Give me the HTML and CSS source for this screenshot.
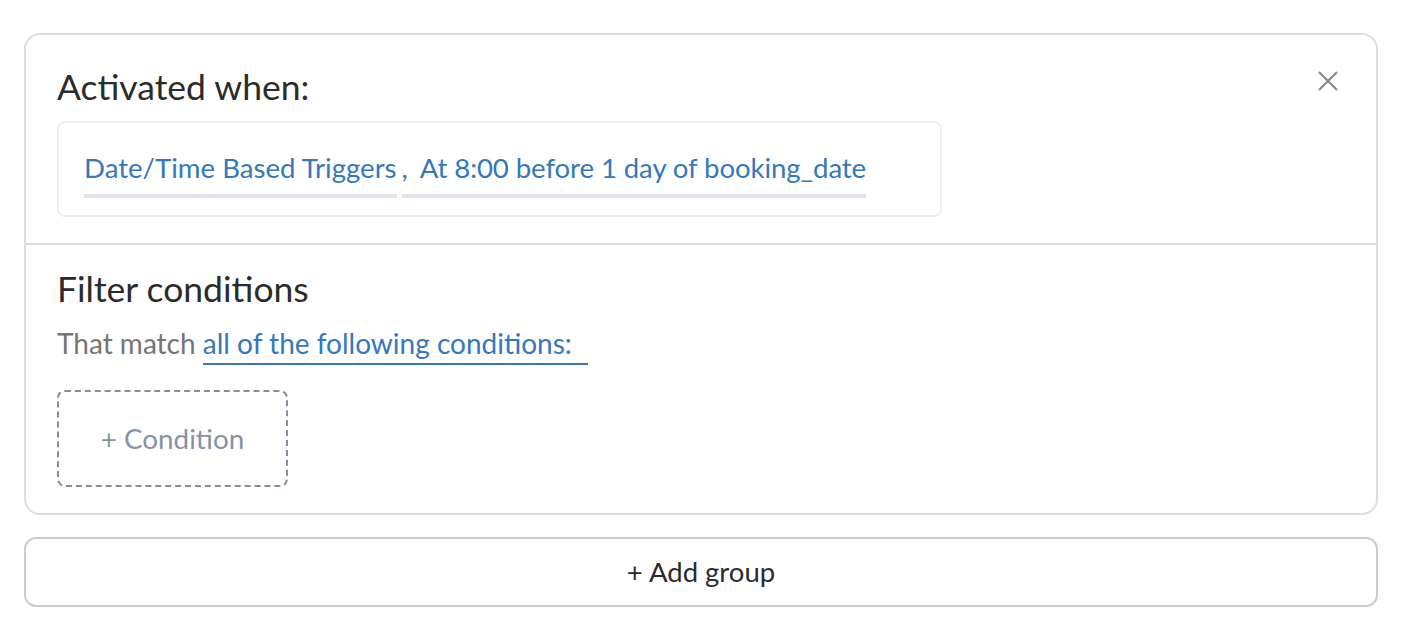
FILE: index.html
```html
<!DOCTYPE html>
<html>
<head>
<meta charset="utf-8">
<link rel="stylesheet" href="styles.css">
</head>
<body>
<div class="page">
  <div class="card">
    <div class="section top">
      <div class="head-row">
        <h2 class="title">Activated when:</h2>
        <button class="close" aria-label="close">
          <svg width="20" height="20" viewBox="0 0 20 20"><path d="M1 1 L19 19 M19 1 L1 19" stroke="#8a8a8a" stroke-width="2.2" fill="none"/></svg>
        </button>
      </div>
      <div class="trigger-box">
        <span class="trig">Date/Time Based Triggers</span><span class="trig second"><span class="comma">,</span>At 8:00 before 1 day of booking_date</span>
      </div>
    </div>
    <div class="section bottom">
      <h2 class="title">Filter conditions</h2>
      <div class="match"><span class="muted">That match</span> <span class="match-link">all of the following conditions:</span></div>
      <button class="add-cond">+ Condition</button>
    </div>
  </div>
  <button class="add-group">+ Add group</button>
</div>
</body>
</html>
```

FILE: styles.css
```css
* { box-sizing: border-box; }
html, body { margin: 0; padding: 0; background: #fff; }
body { font-family: "Lato", "Liberation Sans", sans-serif; color: #333; }
.page { padding: 33px 32px 0 24px; }
.card {
  border: 2px solid #dddddd;
  border-radius: 16px;
  background: #fff;
}
.section.top {
  padding: 30px 38px 26px 31px;
  border-bottom: 2px solid #dddddd;
}
.head-row {
  display: flex;
  justify-content: space-between;
  align-items: flex-start;
}
.title {
  margin: 0;
  font-weight: 400;
  font-size: 35.5px;
  line-height: 44px;
  color: #2b2b2b;
}
.close {
  border: 0;
  background: none;
  padding: 0;
  margin-top: 6px;
  width: 20px;
  height: 20px;
  cursor: pointer;
}
.close svg { display: block; }
.trigger-box {
  margin-top: 12px;
  width: 885px;
  height: 96px;
  border: 2px solid #eeeeee;
  border-radius: 8px;
  padding: 27px 25px 0 25px;
  font-size: 27.6px;
  line-height: 36px;
  color: #3579ba;
  white-space: nowrap;
}
.trig {
  display: inline-block;
  border-bottom: 4px solid #dfe4eb;
  padding-bottom: 8px;
}
.trig.second { margin-left: 5px; letter-spacing: -0.1px; }
.comma { margin-right: 12px; }
.section.bottom {
  padding: 22px 31px 26px 31px;
}
.match {
  margin-top: 14px;
  font-size: 28px;
  line-height: 36px;
}
.muted { color: #757575; }
.match-link {
  display: inline-block;
  color: #3579ba;
  border-bottom: 2px solid #3579ba;
  padding-right: 16px;
  padding-bottom: 2px;
}
.add-cond {
  display: block;
  margin-top: 25px;
  width: 231px;
  height: 97px;
  border: 2px dashed #848e9d;
  border-radius: 8px;
  background: #fff;
  font-family: inherit;
  font-size: 27.8px;
  color: #8592a5;
  cursor: pointer;
}
.add-group {
  display: block;
  width: 100%;
  margin-top: 22px;
  height: 70px;
  padding-bottom: 3px;
  border: 2px solid #cccccc;
  border-radius: 12px;
  background: #fff;
  font-family: inherit;
  font-size: 27.5px;
  color: #2b2b2b;
  cursor: pointer;
}
```
